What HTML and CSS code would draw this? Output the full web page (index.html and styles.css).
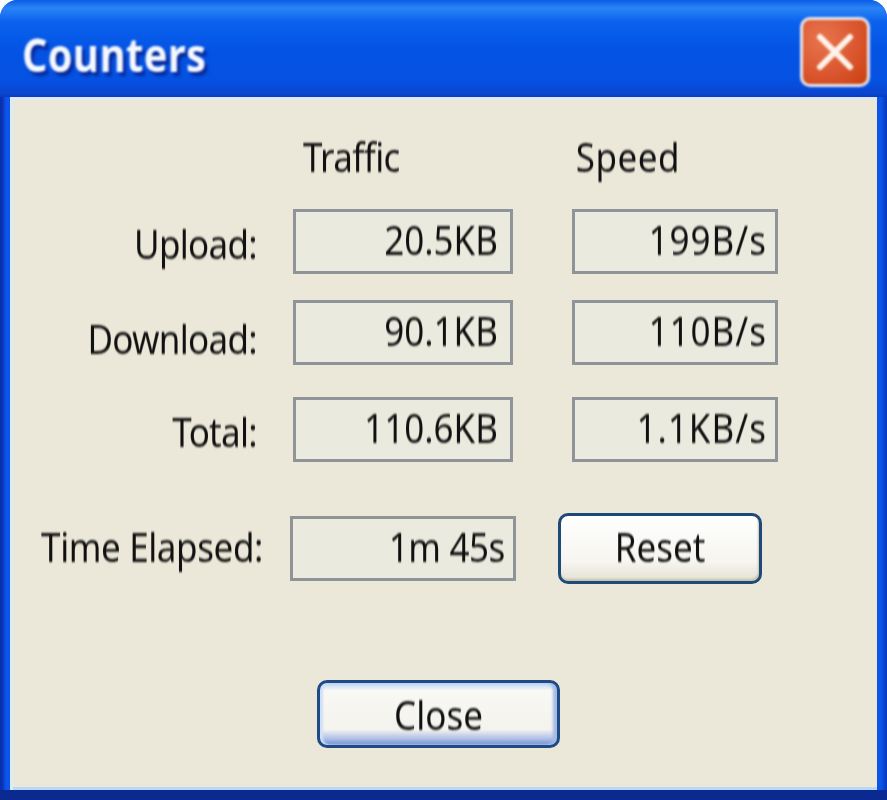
FILE: index.html

```html
<!DOCTYPE html>
<html lang="en">
<head>
  <meta charset="UTF-8" />
  <title>Counters</title>
  <link rel="stylesheet" href="styles.css">
</head>
<body>
  <div class="window">
    <div class="titlebar">
      <span class="title">Counters</span>
      <button class="btn-x" aria-label="Close">
        <svg width="44" height="44" viewBox="0 0 44 44">
          <path d="M7 7 L37 37 M37 7 L7 37" stroke="#fff3ea" stroke-width="6" stroke-linecap="round" />
        </svg>
      </button>
    </div>
    <div class="client">
      <div class="heads">
        <span class="head-traffic"><span class="txt">Traffic</span></span>
        <span class="head-speed"><span class="txt">Speed</span></span>
      </div>
      <div class="row row-upload">
        <span class="label"><span class="txt">Upload:</span></span>
        <span class="field f-traffic"><span class="txt">20.5KB</span></span>
        <span class="field f-speed"><span class="txt">199B/s</span></span>
      </div>
      <div class="row row-download">
        <span class="label label-low"><span class="txt">Download:</span></span>
        <span class="field f-traffic"><span class="txt">90.1KB</span></span>
        <span class="field f-speed"><span class="txt">110B/s</span></span>
      </div>
      <div class="row row-total">
        <span class="label"><span class="txt">Total:</span></span>
        <span class="field f-traffic"><span class="txt">110.6KB</span></span>
        <span class="field f-speed"><span class="txt">1.1KB/s</span></span>
      </div>
      <div class="row-time">
        <span class="label-time"><span class="txt">Time Elapsed:</span></span>
        <span class="field f-time"><span class="txt">1m 45s</span></span>
        <button class="btn btn-reset"><span class="txt">Reset</span></button>
      </div>
      <div class="footer">
        <button class="btn btn-close"><span class="txt">Close</span></button>
      </div>
    </div>
  </div>
</body>
</html>
```

FILE: styles.css

```css
html, body { margin: 0; padding: 0; background: #fff; }
body { font-family: "Noto Sans", "Liberation Sans", sans-serif; color: #111; }

.window {
  width: 887px; height: 800px; box-sizing: border-box;
  display: flex; flex-direction: column;
  border-radius: 18px 18px 0 0;
  overflow: hidden;
  background:
    linear-gradient(0deg, #0a2a92 10px, transparent 10px),
    linear-gradient(90deg, #0a30b0 0, #0a30b0 2px, #0b55ea 6px, #0b55ea 881px, #0a35b8 887px);
}

.titlebar {
  height: 97px; flex: none; box-sizing: border-box;
  display: flex; align-items: center; justify-content: space-between;
  padding: 0 17px 0 22px;
  background: linear-gradient(180deg, #0a5ce6 0, #2a84f4 8px, #0a62ee 22px, #0453e4 50px, #0551e2 80px, #0a45cf 94px, #0a3cb8 97px);
}
.title {
  font-size: 40px; font-weight: 700; color: #f4f8ff; line-height: 1;
  font-family: "Open Sans", "Noto Sans", sans-serif;
  letter-spacing: 0.3px;
  text-shadow: 3px 3px 2px #0a2a9a;
  margin-top: 12px;
  transform: scaleY(1.15);
  filter: blur(0.8px);
}
.btn-x {
  width: 70px; height: 70px; padding: 0; margin-top: 7px; box-sizing: border-box;
  display: flex; align-items: center; justify-content: center;
  border: 3px solid #e8e4e8; border-radius: 10px;
  background: radial-gradient(circle at 30% 30%, #e8754e, #d9542c 60%, #c9400f);
  filter: blur(0.8px);
}

.client {
  flex: 1; margin: 0 10px 10px;
  background: #ebe8d9;
  box-shadow: inset 0 3px 0 #dfe6f4, inset 3px 0 0 #dcecf6, inset 0 -3px 0 #b8d8f6;
  display: flex; flex-direction: column;
}
.txt { display: inline-block; transform: scaleY(1.16); filter: blur(0.7px); }

.heads {
  display: flex; height: 46px; margin-top: 36px;
  align-items: center; font-size: 35px;
}
.head-traffic { margin-left: 293px; letter-spacing: -0.6px; }
.head-speed { margin-left: 176px; letter-spacing: 0.5px; }

.row { display: flex; align-items: center; height: 65px; font-size: 35px; }
.row-upload { margin-top: 30px; }
.row-download { margin-top: 26px; }
.row-total { margin-top: 32px; }
.label {
  box-sizing: border-box; width: 247px; text-align: right; margin-right: 36px;
  padding-top: 4px; letter-spacing: -0.7px;
}
.label-low { padding-top: 12px; }

.field {
  box-sizing: border-box; height: 65px;
  display: flex; align-items: center; justify-content: flex-end;
  padding: 0 12px 4px 0;
  border: 3px solid #8f9499;
  background: #ebeadf;
}
.f-traffic { width: 220px; margin-right: 59px; }
.f-speed { width: 206px; padding-right: 8px; letter-spacing: 1px; }

.row-time { display: flex; align-items: center; height: 71px; margin-top: 51px; font-size: 35px; }
.label-time {
  box-sizing: border-box; width: 253px; text-align: right; margin-right: 27px;
  padding-bottom: 4px; letter-spacing: -0.4px;
}
.f-time { width: 226px; margin-right: 42px; padding-right: 8px; letter-spacing: -0.4px; }

.btn {
  box-sizing: border-box; padding: 0;
  font: inherit; font-size: 35px; color: #111;
  border: 3px solid #1f4a78; border-radius: 10px;
  background: linear-gradient(180deg, #ffffff 0, #f6f5f0 70%, #e4e0d4 100%);
}
.btn-reset { width: 204px; height: 71px; padding-bottom: 4px; box-shadow: inset -1px -2px 2px #c5c2b2; }
.footer { display: flex; margin-top: 96px; }
.btn-close {
  width: 243px; height: 68px; margin-left: 307px;
  border-color: #1f4a86;
  background: linear-gradient(180deg, #bcd6f6 0, #f8f8f4 12%, #f4f3ee 75%, #aebfe8 90%, #6f8fd0 100%);
  box-shadow: inset 3px 0 2px #cfe0f8, inset -4px 0 3px #a3b9e6;
}
```
